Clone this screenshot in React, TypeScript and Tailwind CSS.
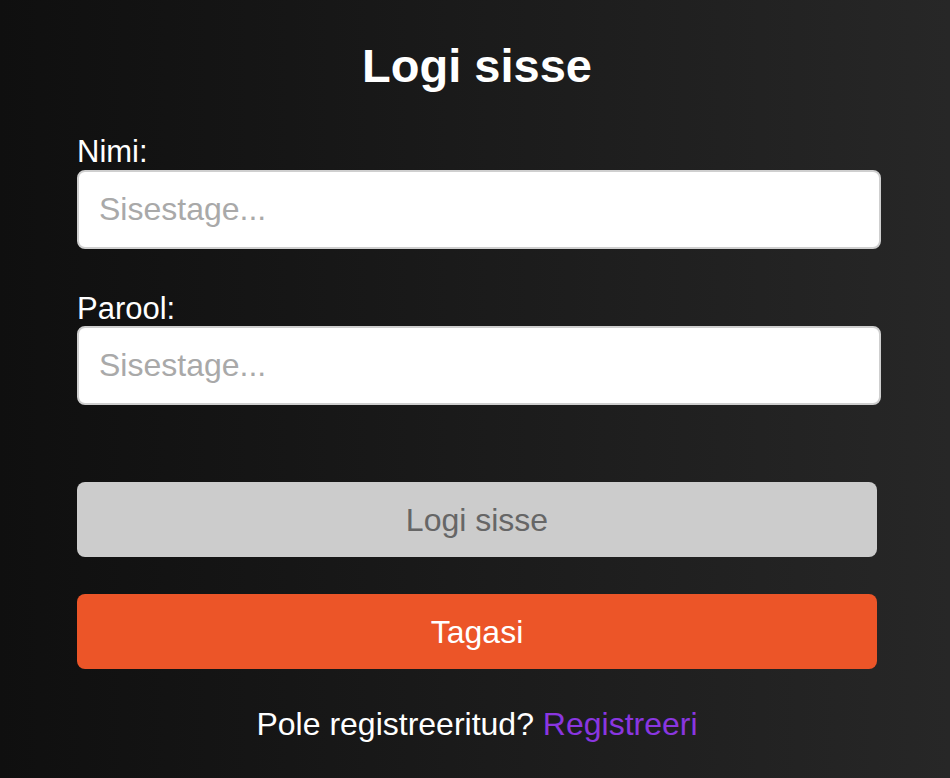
export default function App() {
  return (
    <div className="min-h-[778px] w-full bg-gradient-to-r from-[#0f0f0f] to-[#272727] font-['Liberation_Sans',Arial,sans-serif] text-white">
      <div className="flex justify-center pl-1">
        <form className="flex w-[800px] flex-col pt-[42px]" onSubmit={(e) => e.preventDefault()}>
          <h1 className="text-center text-[47px] font-bold leading-[47px]">Logi sisse</h1>

          <label htmlFor="nimi" className="mt-[48px] text-[31px] leading-[30px]">
            Nimi:
          </label>
          <input
            id="nimi"
            type="text"
            placeholder="Sisestage..."
            className="mt-[3px] h-[79px] w-[804px] rounded-lg border-2 border-[#cfcfcf] bg-white px-5 text-[32px] text-black placeholder:text-[#a9a9a9] outline-none"
          />

          <label htmlFor="parool" className="mt-[45px] text-[31px] leading-[30px]">
            Parool:
          </label>
          <input
            id="parool"
            type="password"
            placeholder="Sisestage..."
            className="mt-[2px] h-[79px] w-[804px] rounded-lg border-2 border-[#cfcfcf] bg-white px-5 text-[32px] text-black placeholder:text-[#a9a9a9] outline-none"
          />

          <button
            type="submit"
            disabled
            className="mt-[77px] h-[75px] w-full rounded-lg bg-[#cccccc] text-[32px] text-[#666666]"
          >
            Logi sisse
          </button>
          <button type="button" className="mt-[37px] h-[75px] w-full rounded-lg bg-[#ec5528] text-[32px] text-white">
            Tagasi
          </button>

          <p className="mt-[40px] text-center text-[32px] leading-[30px]">
            Pole registreeritud? <a href="#" className="text-[#8a36e0]">Registreeri</a>
          </p>
        </form>
      </div>
    </div>
  )
}
